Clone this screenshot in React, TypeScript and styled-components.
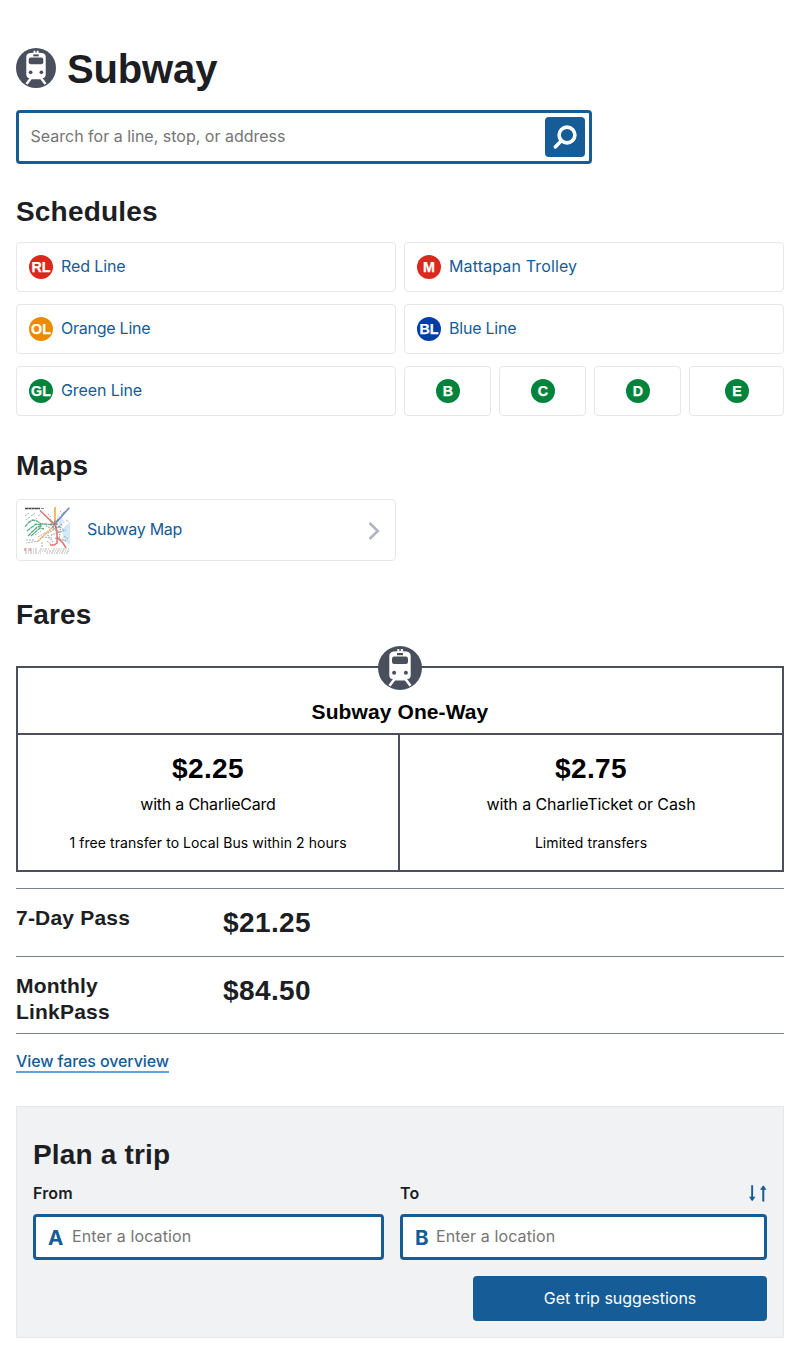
import React from "react";
import styled, { createGlobalStyle } from "styled-components";

const blue = "#165c96";
const slate = "#494f5c";
const ink = "#1c1e23";

const GlobalStyle = createGlobalStyle`
  *, *::before, *::after { box-sizing: border-box; }
  body {
    margin: 0;
    background: #fff;
    color: ${ink};
    font-family: Inter, "Liberation Sans", sans-serif;
    font-size: 16px;
    line-height: 24px;
  }
`;

const headingFont = `"Liberation Sans", Arial, sans-serif`;

const Page = styled.main`
  width: 800px;
  height: 1354px;
  padding: 48px 16px 0;
`;

const TitleRow = styled.header`
  display: flex;
  gap: 11px;
  height: 62px;
`;

const Title = styled.h1`
  margin: 0;
  font: 700 40px/42px ${headingFont};
  letter-spacing: -0.15px;
`;

const SearchBox = styled.div`
  display: flex;
  align-items: center;
  justify-content: space-between;
  width: 576px;
  height: 54px;
  padding: 0 4px 0 11.500px;
  border: 3px solid ${blue};
  border-radius: 4px;
`;

const Placeholder = styled.span<{ $track?: number }>`
  padding-bottom: 2px;
  color: #757575;
  letter-spacing: ${(p) => p.$track ?? 0}px;
`;

const SearchButton = styled.button`
  display: flex;
  width: 40px;
  height: 40px;
  padding: 0;
  border: 0;
  border-radius: 4px;
  background: ${blue};
`;

const Heading = styled.h2<{ $height: number; $top?: number }>`
  height: ${(p) => p.$height}px;
  margin: 0;
  padding-top: ${(p) => p.$top ?? 31}px;
  font: 700 28px/34px ${headingFont};
  letter-spacing: 0.18px;
`;

const LineGrid = styled.div`
  display: grid;
  grid-template-columns: 380px 380px;
  gap: 12px 8px;
`;

const Branches = styled.div`
  display: grid;
  grid-template-columns: 87px 87px 87px 95px;
  gap: 8px;
`;

const LineCard = styled.a<{ $center?: boolean }>`
  display: flex;
  align-items: center;
  justify-content: ${(p) => (p.$center ? "center" : "flex-start")};
  gap: 8px;
  height: 50px;
  padding: 0 ${(p) => (p.$center ? 0 : 12)}px;
  border: 1px solid #e6e7eb;
  border-radius: 4px;
  color: ${blue};
`;

const CardLabel = styled.span<{ $track: number }>`
  padding-bottom: 2px;
  letter-spacing: ${(p) => p.$track}px;
`;

const Badge = styled.svg`
  display: block;
  flex: none;
  width: 24px;
  height: 24px;
`;

const MapCard = styled.a`
  display: flex;
  align-items: center;
  width: 380px;
  height: 62px;
  padding: 0 15px 0 7px;
  border: 1px solid #e6e7eb;
  border-radius: 4px;
  color: ${blue};
`;

const MapLabel = styled.span`
  flex: 1;
  padding: 0 0 2px 16px;
  letter-spacing: -0.27px;
`;

const FareTable = styled.div`
  position: relative;
  height: 206px;
  border: 2px solid ${slate};
  color: #000;
`;

const FareIcon = styled.div`
  position: absolute;
  top: -22px;
  left: 360px;
`;

const FareTitle = styled.h3`
  height: 67px;
  margin: 0;
  padding-top: 31px;
  border-bottom: 2px solid ${slate};
  font: 700 21px/26px ${headingFont};
  letter-spacing: 0.1px;
  text-align: center;
`;

const FareColumns = styled.div`
  display: grid;
  grid-template-columns: 382px 382px;
  height: 135px;
`;

const FareCell = styled.div`
  display: flex;
  flex-direction: column;
  align-items: center;
  padding-top: 17px;

  &:first-child { border-right: 2px solid ${slate}; }
`;

const Price = styled.span`
  font: 700 28px/34px ${headingFont};
  letter-spacing: 0.4px;
`;

const FareMedia = styled.span<{ $track: number }>`
  margin-top: 6px;
  letter-spacing: ${(p) => p.$track}px;
`;

const FareNote = styled.span`
  margin-top: 15px;
  font-size: 14px;
  letter-spacing: 0.07px;
`;

const PassRow = styled.div<{ $height: number }>`
  display: grid;
  grid-template-columns: 160px 1fr;
  column-gap: 47px;
  height: ${(p) => p.$height}px;
  padding-top: 16px;
  border-top: 1px solid #788093;

  ${Price} { padding-top: 1px; }
`;

const PassList = styled.div`
  margin-top: 16px;
  border-bottom: 1px solid #788093;
`;

const PassName = styled.h3`
  margin: 0;
  font: 700 21px/26px ${headingFont};
  letter-spacing: 0.2px;
`;

const LinkRow = styled.div`
  display: flex;
  height: 72px;
  padding-top: 15px;
`;

const FareLink = styled.a`
  height: 24px;
  border-bottom: 2px solid #5aa5e2;
  color: ${blue};
  font-weight: 500;
  letter-spacing: -0.1px;
`;

const Planner = styled.section`
  height: 232px;
  padding: 0 16px;
  border: 1px solid #e6e7eb;
  background: #f1f2f4;
`;

const Fields = styled.div`
  display: grid;
  grid-template-columns: 351px 367px;
  gap: 16px;
`;

const FieldLabel = styled.div`
  display: flex;
  align-items: center;
  justify-content: space-between;
  height: 24px;
  margin-bottom: 9px;
  font-weight: 600;
  letter-spacing: 0.15px;
`;

const LocationBox = styled.div`
  display: flex;
  align-items: center;
  height: 46px;
  padding-left: 12px;
  border: 3px solid ${blue};
  border-radius: 4px;
  background: #fff;
`;

const Pin = styled.span<{ $width: number }>`
  width: ${(p) => p.$width}px;
  padding-top: 1px;
  color: ${blue};
  font-size: 20.500px;
  font-weight: 650;
`;

const Submit = styled.button`
  display: block;
  width: 294px;
  height: 45px;
  margin: 16px 0 0 auto;
  padding: 0 0 2px;
  border: 0;
  border-radius: 4px;
  background: ${blue};
  color: #fff;
  font: 400 16px/24px Inter, "Liberation Sans", sans-serif;
`;

const Icon = styled.svg`
  display: block;
  flex: none;
`;

const Chevron = styled(Icon)`
  margin-top: 2px;
`;

function TrainIcon({ size }: { size: number }) {
  return (
    <Icon width={size} height={size} viewBox="0 0 44 44">
      <circle cx="22" cy="22" r="22" fill={slate} />
      <path d="M19.300 3h2v2.500h-2zM22.800 3h2.100v2.500h-2.100z" fill="#fff" />
      <path d="M15.500 5.600Q22 4.500 28.500 5.600q4.200.7 4.200 4.600v18.800q0 4.300-4.300 4.300h-.2l-1.700 1.200h-9l-1.700-1.200h-.2q-4.300 0-4.300-4.300V10.200q0-3.900 4.200-4.600Z" fill="#fff" />
      <path d="M17 32.500 11.500 39.700M27 32.500 32.500 39.700" stroke="#fff" strokeWidth="2.600" />
      <rect x="19" y="7" width="6" height="2.200" fill={slate} />
      <rect x="14" y="10.400" width="16" height="7.600" rx="2.200" fill={slate} />
      <circle cx="16.100" cy="26.800" r="2" fill={slate} />
      <circle cx="27.900" cy="26.800" r="2" fill={slate} />
    </Icon>
  );
}

function RouteBadge({ label, color }: { label: string; color: string }) {
  return (
    <Badge viewBox="0 0 24 24">
      <circle cx="12" cy="12" r="12" fill={color} />
      <text
        x="12"
        y="17.200"
        textAnchor="middle"
        fill="#fff"
        stroke="#fff"
        strokeWidth="0.250"
        fontFamily="Liberation Sans"
        fontWeight="700"
        fontSize="14.300"
      >
        {label}
      </text>
    </Badge>
  );
}

function MapThumb() {
  return (
    <Icon width="47" height="47" viewBox="0 0 47 47" fill="none">
      <path d="M46 15 41 19l-3 5 1 4-1 5 3 2 5 3Z" fill="#d3e9f8" />
      <path d="M34 8l4 2 3 6-5 2-4-4Z" fill="#d9e8f2" />
      <path d="M1 1.500h15" stroke="#444" strokeWidth="1.300" strokeDasharray="3 .3" />
      <path d="M17 1.500h3m25-1v1" stroke="#888" />
      <g stroke="#8d979e" opacity=".75">
        <path d="M1 9l4-3m2 3 4-3m3 3 3-2M2 13l4-3m4 4 3-3M9 24l5-3m-3 7 6-4m-3 6 8-5M37 8l4-4m1 9 3 2M24 7l3 3m9-6 3 3" strokeDasharray="2 1" />
        <path d="M26 12l7 14m-11-7 14 6m-12 1 15-9m-13-4 14 10m-18 3 7 9m8-18-2 17m-8-6 15-5m-11 8 12 3" strokeDasharray="1.500 1" strokeWidth="1.400" />
        <path d="M15 34l-13 2m0-3h9m7 2v6m5-7 5 4m12-9 4 3M18 30l10 1" strokeDasharray="2 1" />
      </g>
      <path d="M1 20q4-6 8-7l4 1 4 3h4l9 1M3 24l9-7 5 1M4 29l9-9 5-1M7 29l9-8 4 1" stroke="#5ba985" strokeWidth="1.300" strokeDasharray="4 .5" />
      <path d="M31 0v18" stroke="#efa535" strokeWidth="1.500" />
      <path d="M30 19 14 34" stroke="#f0ad61" strokeWidth="1.500" strokeDasharray="2 .5" />
      <path d="M45 1 30 18" stroke="#6986be" strokeWidth="1.500" />
      <path d="M16 3.500 31 18l2 6v12l-3 2h-4m7-8 6 6 3 5" stroke="#e5716e" strokeWidth="1.500" />
      <path d="M26 17h9m-7 3h8m-6-5 5-3" stroke="#657f96" strokeDasharray="2 1" />
      <path d="M1 42h12m3 0h10m3 0h16M1 44h12m2 0h12m1 0h17M1 46h16m5 0h22" stroke="#888" strokeWidth=".8" strokeDasharray="2 1 1 1" opacity=".8" />
      <path d="M1 41v3m5-3v3" stroke="#e5716e" />
    </Icon>
  );
}

const App = () => (
  <Page>
    <GlobalStyle />
    <TitleRow>
      <TrainIcon size={40} />
      <Title>Subway</Title>
    </TitleRow>
    <SearchBox>
      <Placeholder>Search for a line, stop, or address</Placeholder>
      <SearchButton aria-label="Search">
        <Icon width="40" height="40" viewBox="0 0 40 40" fill="none" stroke="#fff">
          <circle cx="22" cy="18" r="7.900" strokeWidth="3.600" />
          <path d="m16 24-5.700 6" strokeWidth="3.500" strokeLinecap="round" />
        </Icon>
      </SearchButton>
    </SearchBox>

    <Heading $height={78}>Schedules</Heading>
    <LineGrid>
      <LineCard><RouteBadge label="RL" color="#da291c" /><CardLabel $track={-0.12}>Red Line</CardLabel></LineCard>
      <LineCard><RouteBadge label="M" color="#da291c" /><CardLabel $track={0.14}>Mattapan Trolley</CardLabel></LineCard>
      <LineCard><RouteBadge label="OL" color="#ed8b00" /><CardLabel $track={-0.25}>Orange Line</CardLabel></LineCard>
      <LineCard><RouteBadge label="BL" color="#003da5" /><CardLabel $track={-0.22}>Blue Line</CardLabel></LineCard>
      <LineCard><RouteBadge label="GL" color="#00843d" /><CardLabel $track={-0.1}>Green Line</CardLabel></LineCard>
      <Branches>
        {["B", "C", "D", "E"].map((b) => (
          <LineCard key={b} $center><RouteBadge label={b} color="#00843d" /></LineCard>
        ))}
      </Branches>
    </LineGrid>

    <Heading $height={83} $top={33}>Maps</Heading>
    <MapCard>
      <MapThumb />
      <MapLabel>Subway Map</MapLabel>
      <Chevron width="12" height="20" viewBox="0 0 12 20" fill="none" stroke="#b0b5c0" strokeWidth="2.600">
        <path d="m1.500 2 8.300 8-8.300 8" />
      </Chevron>
    </MapCard>

    <Heading $height={105} $top={37}>Fares</Heading>
    <FareTable>
      <FareIcon><TrainIcon size={44} /></FareIcon>
      <FareTitle>Subway One-Way</FareTitle>
      <FareColumns>
        <FareCell>
          <Price>$2.25</Price>
          <FareMedia $track={-0.22}>with a CharlieCard</FareMedia>
          <FareNote>1 free transfer to Local Bus within 2 hours</FareNote>
        </FareCell>
        <FareCell>
          <Price>$2.75</Price>
          <FareMedia $track={-0.08}>with a CharlieTicket or Cash</FareMedia>
          <FareNote>Limited transfers</FareNote>
        </FareCell>
      </FareColumns>
    </FareTable>
    <PassList>
      <PassRow $height={68}><PassName>7-Day Pass</PassName><Price>$21.25</Price></PassRow>
      <PassRow $height={77}><PassName>Monthly LinkPass</PassName><Price>$84.50</Price></PassRow>
    </PassList>
    <LinkRow><FareLink>View fares overview</FareLink></LinkRow>

    <Planner>
      <Heading $height={74}>Plan a trip</Heading>
      <Fields>
        <div>
          <FieldLabel>From</FieldLabel>
          <LocationBox><Pin $width={24}>A</Pin><Placeholder $track={0.12}>Enter a location</Placeholder></LocationBox>
        </div>
        <div>
          <FieldLabel>
            To
            <Icon width="19" height="18" viewBox="0 0 19 18" fill={blue}>
              <path d="M3.200 1.300h1.900v11.500h2.300L4.700 16.800h-1L1 12.800h2.200ZM14.300 17.400V5.700H12l2.800-4h1l2.700 4h-2.200v11.700Z" />
            </Icon>
          </FieldLabel>
          <LocationBox><Pin $width={21}>B</Pin><Placeholder $track={0.12}>Enter a location</Placeholder></LocationBox>
        </div>
      </Fields>
      <Submit>Get trip suggestions</Submit>
    </Planner>
  </Page>
);

export default App;
